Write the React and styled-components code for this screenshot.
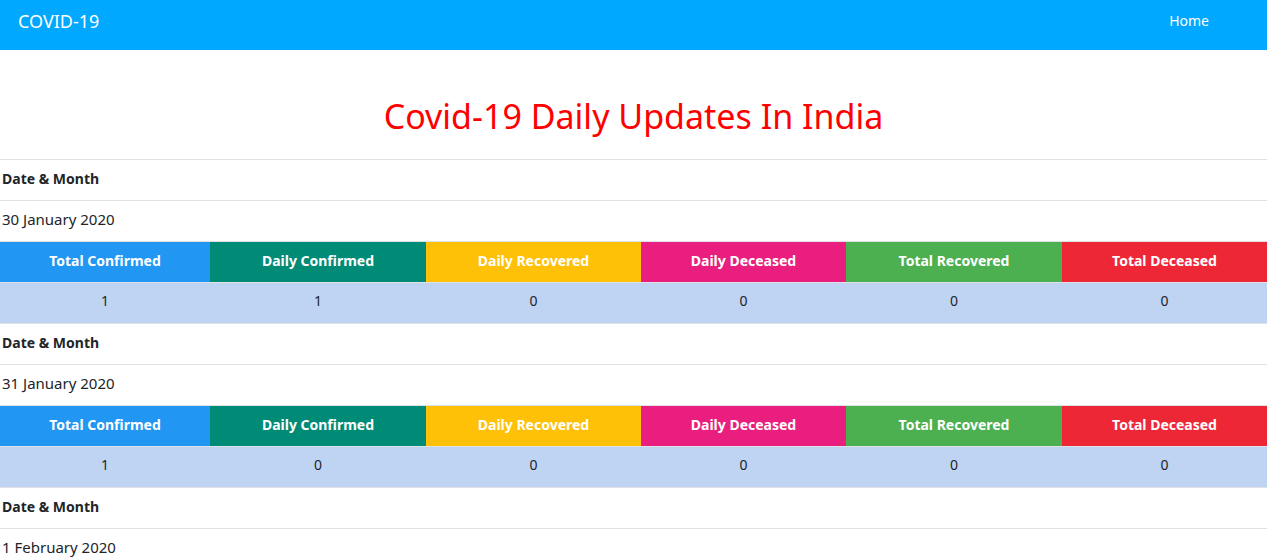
import React from 'react'
import styled, { createGlobalStyle } from 'styled-components'

const days = [
    { date: '30 January 2020', values: [1, 1, 0, 0, 0, 0] },
    { date: '31 January 2020', values: [1, 0, 0, 0, 0, 0] },
    { date: '1 February 2020', values: [1, 0, 0, 0, 0, 0] },
]

const heads = [
    { label: 'Total Confirmed', color: '#2196f3' },
    { label: 'Daily Confirmed', color: '#008b76' },
    { label: 'Daily Recovered', color: '#ffc107' },
    { label: 'Daily Deceased', color: '#e91e7e' },
    { label: 'Total Recovered', color: '#4caf50' },
    { label: 'Total Deceased', color: '#ee2737' },
]

function App() {
    return (
        <>
            <GlobalStyle />
            <Navbar>
                <Brand>COVID-19</Brand>
                <NavLink>Home</NavLink>
            </Navbar>
            <Title>Covid-19 Daily Updates In India</Title>
            <Table>
                {days.map((day) => (
                    <DayBlock key={day.date}>
                        <LabelRow>Date &amp; Month</LabelRow>
                        <DateRow>{day.date}</DateRow>
                        <Grid>
                            {heads.map((h) => (
                                <HeadCell key={h.label} bg={h.color}>{h.label}</HeadCell>
                            ))}
                        </Grid>
                        <Grid>
                            {day.values.map((v, i) => (
                                <ValueCell key={i}>{v}</ValueCell>
                            ))}
                        </Grid>
                    </DayBlock>
                ))}
            </Table>
        </>
    )
}

export default App

const GlobalStyle = createGlobalStyle`
    body {
        margin: 0;
        font-family: "Noto Sans", "Open Sans", sans-serif;
        color: #212529;
        background: #fff;
    }
`

const Navbar = styled.div`
    height: 50px;
    background-color: #00a8ff;
    display: flex;
    justify-content: space-between;
    align-items: flex-start;
    padding: 0 56px 0 18px;
    color: white;
`

const Brand = styled.div`
    font-size: 18px;
    line-height: 42px;
`

const NavLink = styled.div`
    font-size: 14px;
    line-height: 42px;
    margin-right: 2px;
`

const Title = styled.h1`
    margin: 0;
    padding: 45px 0 22px;
    text-align: center;
    color: #ff0000;
    font-weight: 400;
    font-size: 34px;
    line-height: 42px;
`

const Table = styled.div`
    border-top: 1px solid #dee2e6;
`

const DayBlock = styled.div``

const LabelRow = styled.div`
    height: 40px;
    line-height: 38px;
    padding-left: 2px;
    font-size: 14px;
    font-weight: 700;
    border-bottom: 1px solid #dee2e6;
`

const DateRow = styled.div`
    height: 40px;
    line-height: 36px;
    padding-left: 2px;
    font-size: 15px;
    border-bottom: 1px solid #dee2e6;
`

const Grid = styled.div`
    display: grid;
    grid-template-columns: 210px 216px 215px 205px 216px 1fr;
`

const HeadCell = styled.div`
    height: 40px;
    line-height: 37px;
    text-align: center;
    background-color: ${(p) => p.bg};
    color: white;
    font-weight: 700;
    font-size: 14px;
    border-bottom: 1px solid #dee2e6;
`

const ValueCell = styled.div`
    height: 40px;
    line-height: 36px;
    text-align: center;
    background-color: #bfd3f3;
    font-size: 14px;
    border-bottom: 1px solid #dee2e6;
`
